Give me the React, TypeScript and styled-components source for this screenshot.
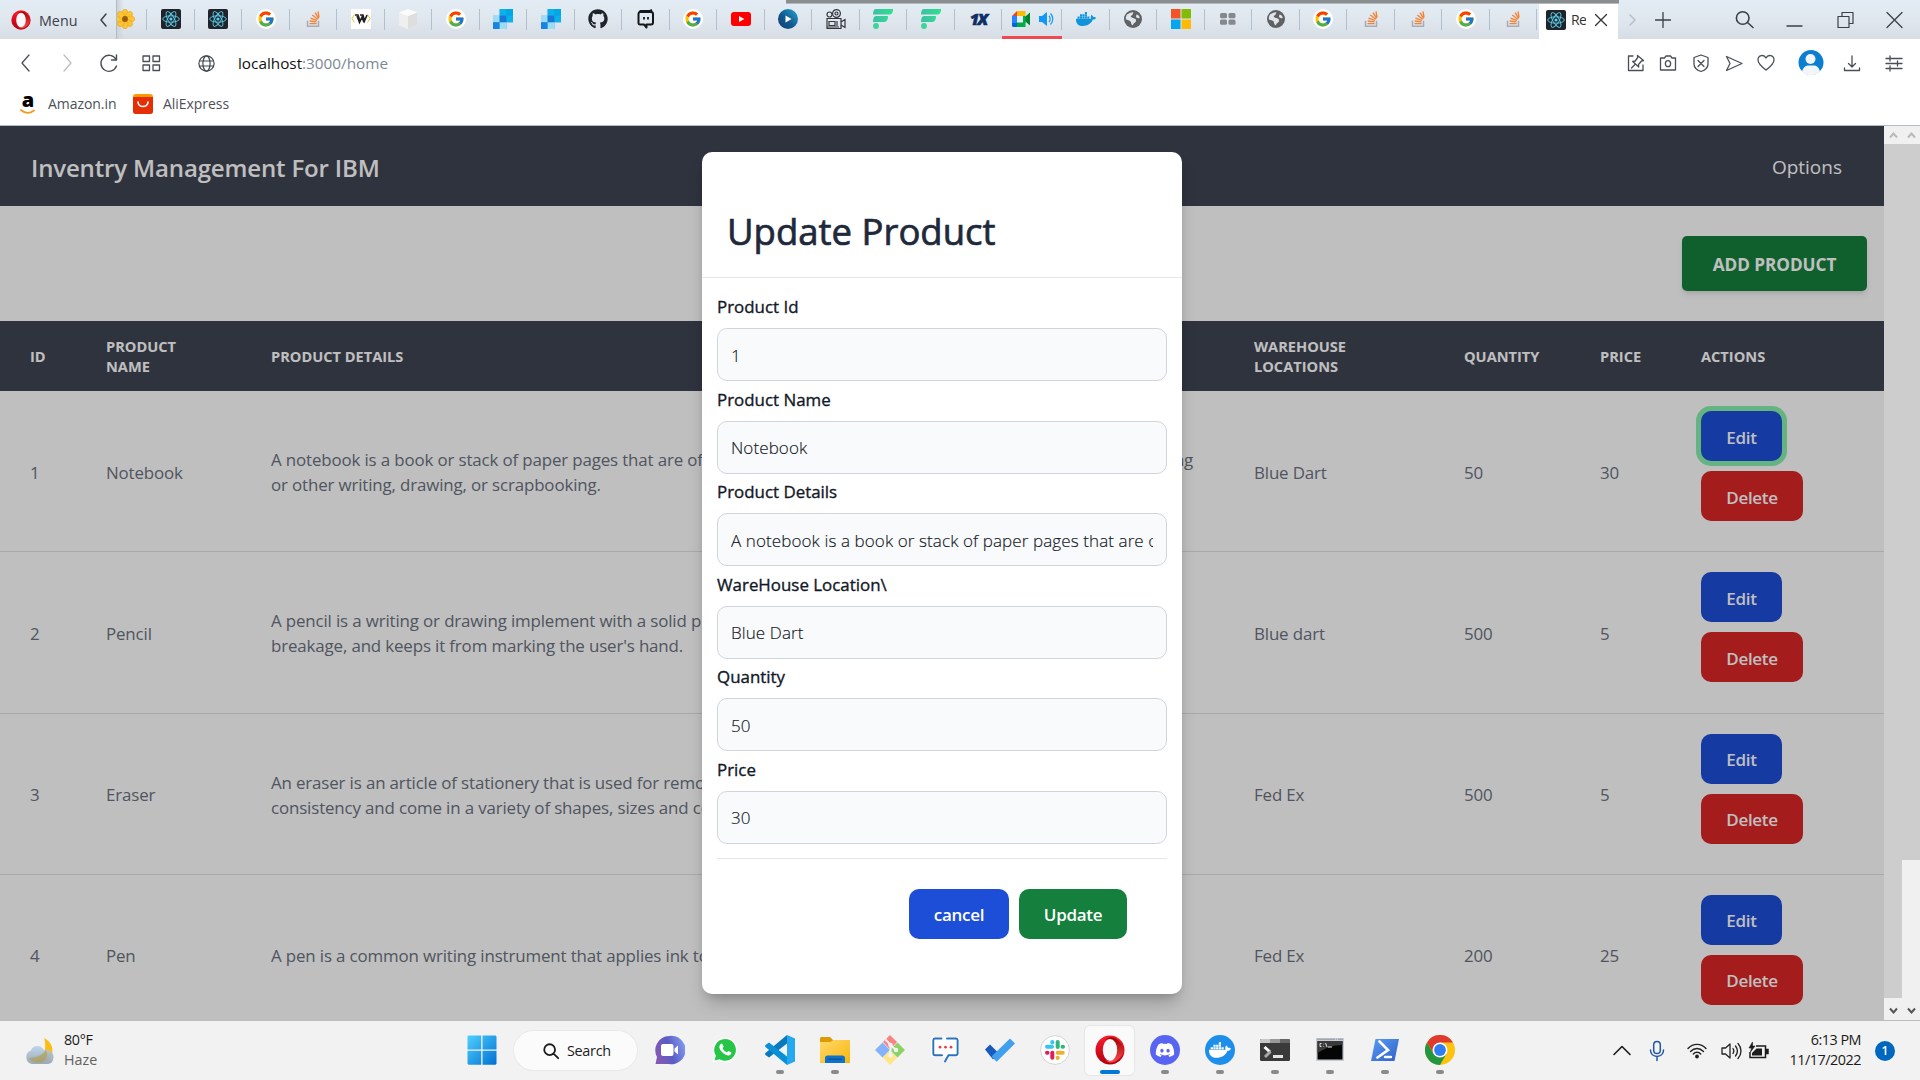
import React from "react";
import styled, { createGlobalStyle, css } from "styled-components";
import { FcGoogle } from "react-icons/fc";
import { FaGithub, FaDocker, FaDiscord } from "react-icons/fa";

const Global = createGlobalStyle`
  *, *::before, *::after { box-sizing: border-box; }
  body { margin: 0; overflow: hidden; }
  button, input { font-family: inherit; }
  svg { display: block; flex: none; }
`;

const Screen = styled.div`
  width: 1920px;
  height: 1080px;
  display: flex;
  flex-direction: column;
  overflow: hidden;
  background: #fff;
  font-family: "Open Sans", "Noto Sans", sans-serif;
`;

/* ---------- browser chrome ---------- */

const TabStrip = styled.div`
  position: relative;
  height: 39px;
  flex: none;
  display: flex;
  background: linear-gradient(#e3ecf4, #dfe6ee 55%, #d8dde5);
`;

const WindowEdge = styled.div`
  position: absolute;
  top: 0;
  left: 786px;
  width: 833px;
  height: 4px;
  background: #8b8e91;
  border-bottom: 1px solid #b4b9be;
`;

const MenuButton = styled.div`
  width: 116px;
  flex: none;
  height: 39px;
  display: flex;
  align-items: center;
  padding-left: 11px;
  font-size: 14.3px;
  color: #3b424c;
`;

const MenuLabel = styled.span`
  margin: 1px 23px 0 8px;
`;

const Tab = styled.div<{ $w?: number; $playing?: boolean }>`
  position: relative;
  width: ${(p) => p.$w ?? 47.5}px;
  flex: none;
  height: 39px;
  padding-bottom: 1px;
  display: flex;
  align-items: center;
  justify-content: center;
  gap: 7px;
  border-bottom: ${(p) => (p.$playing ? "3px solid #f04a50" : "none")};
  padding-top: ${(p) => (p.$playing ? 2 : 0)}px;
  &::after {
    content: "";
    position: absolute;
    right: 0;
    top: 9px;
    width: 1px;
    height: 21px;
    background: #b2c0cd;
  }
`;

const FirstTab = styled(Tab)`
  width: 31px;
  justify-content: flex-start;
  overflow: hidden;
  border-left: 1px solid #b3bac3;
  background: linear-gradient(90deg, #ccd2da, transparent 7px);
  svg { margin-left: -2px; }
`;

const ActiveTab = styled.div`
  width: 79px;
  flex: none;
  margin-left: 2px;
  padding-left: 7px;
  display: flex;
  align-items: center;
  background: #fff;
  font-size: 14px;
  color: #333;
  svg + span { margin: 0 8px 0 5px; width: 15px; overflow: hidden; white-space: nowrap; letter-spacing: -0.6px; }
`;

const WindowButtons = styled.div`
  flex: 1;
  display: grid;
  grid-template-columns: 30px 30px 42px 50px 50px 52px 46px;
  align-items: center;
  justify-items: center;
  color: #3c4047;
`;

const Toolbar = styled.div`
  height: 48px;
  flex: none;
  display: flex;
  align-items: center;
  padding: 0 14px;
  color: #4a4f56;
`;

const NavIcons = styled.div`
  display: grid;
  grid-template-columns: repeat(4, 42px);
  margin-left: -10px;
  justify-items: center;
  align-items: center;
`;

const Address = styled.div`
  flex: 1;
  display: flex;
  align-items: center;
  gap: 23px;
  padding-left: 26px;
  font-size: 15.3px;
  letter-spacing: 0;
  color: #7b8794;
  b { font-weight: 400; color: #111; }
`;

const Actions = styled.div`
  display: grid;
  grid-template-columns: 32px 32px 34px 32px 32px 58px 24px 60px;
  margin-right: -18px;
  justify-items: center;
  align-items: center;
`;

const Bookmarks = styled.div`
  height: 39px;
  flex: none;
  display: flex;
  align-items: center;
  padding: 0 0 5px 19px;
  border-bottom: 1px solid #b1bcc6;
  font-size: 14px;
  letter-spacing: -0.05px;
  color: #4b5158;
`;

const Bookmark = styled.span<{ $w: number; $gap: number }>`
  display: flex;
  align-items: center;
  gap: ${(p) => p.$gap}px;
  width: ${(p) => p.$w}px;
  white-space: nowrap;
`;

const AmazonMark = styled.span`
  width: 18px;
  height: 22px;
  display: flex;
  flex-direction: column;
  align-items: center;
  color: #000;
  font-size: 20px;
  font-weight: 800;
  line-height: 13px;
  svg { margin-top: 3px; }
`;

/* ---------- page ---------- */

const Viewport = styled.div`
  height: 895px;
  flex: none;
  display: flex;
  border-bottom: 1px solid #bdbdbd;
`;

const Page = styled.main`
  position: relative;
  width: 1884px;
  height: 894px;
  overflow: hidden;
  background: #fff;
`;

const Scrollbar = styled.div`
  width: 18px;
  display: flex;
  flex-direction: column;
  background: #f0f0f0;
`;

const ScrollArrow = styled.div<{ $h: number; $tone: string }>`
  height: ${(p) => p.$h}px;
  display: flex;
  align-items: center;
  justify-content: center;
  color: ${(p) => p.$tone};
`;

const Thumb = styled.div<{ $h: number }>`
  height: ${(p) => p.$h}px;
  background: #cdcdcd;
`;

const Spring = styled.div`
  flex: 1;
`;

const Header = styled.header`
  height: 80px;
  display: flex;
  align-items: center;
  justify-content: space-between;
  padding: 0 42px 0 31px;
  background: #3f4453;
  color: #fff;
`;

const Brand = styled.h1`
  margin: 2px 0 0;
  font-size: 24px;
  font-weight: 600;
  letter-spacing: -0.15px;
`;

const Options = styled.span`
  margin-top: 2px;
  font-size: 19px;
`;

const AddBar = styled.div`
  height: 115px;
  display: flex;
  align-items: center;
  justify-content: flex-end;
  padding-right: 17px;
`;

const AddButton = styled.button`
  width: 185px;
  height: 55px;
  padding: 2px 0 0;
  border: 0;
  border-radius: 5px;
  background: #15803d;
  color: #fff;
  font-size: 17.2px;
  font-weight: 700;
  letter-spacing: -0.05px;
  white-space: nowrap;
  box-shadow: 0 4px 6px -1px rgba(0, 0, 0, 0.1), 0 2px 4px -2px rgba(0, 0, 0, 0.1);
`;

const columns = "76px 165px 983px 210px 136px 101px 213px";

const HeadRow = styled.div`
  display: grid;
  grid-template-columns: ${columns};
  align-items: center;
  height: 70px;
  padding-bottom: 1px;
  background: #3f4453;
  color: #fff;
  font-size: 14.6px;
  font-weight: 700;
  line-height: 20px;
  letter-spacing: 0;
  text-transform: uppercase;
`;

const HeadCell = styled.div<{ $narrow?: boolean }>`
  padding: 0 0 0 30px;
  ${(p) => p.$narrow && css`width: 128px;`}
`;

const Row = styled.div`
  display: grid;
  grid-template-columns: ${columns};
  align-items: center;
  height: 161.25px;
  border-bottom: 1.25px solid #e0e2e6;
  color: #6b7280;
  font-size: 16.9px;
  line-height: 25px;
  letter-spacing: -0.14px;
`;

const Cell = styled.div`
  padding: 2px 0 0 30px;
  white-space: pre;
`;

const Buttons = styled.div`
  display: flex;
  flex-direction: column;
  gap: 10px;
  padding: 0 0 10px 30px;
`;

const Action = styled.button<{ $bg: string; $w: number; $ring?: boolean }>`
  width: ${(p) => p.$w}px;
  height: 50px;
  padding: 2px 0 0;
  border: 0;
  border-radius: 10px;
  background: ${(p) => p.$bg};
  color: #fff;
  font-size: 17px;
  font-weight: 600;
  letter-spacing: -0.3px;
  box-shadow: ${(p) => (p.$ring ? "0 0 0 5px #86efac" : "none")};
`;

const Overlay = styled.div`
  position: absolute;
  inset: 0;
  background: rgba(0, 0, 0, 0.25);
`;

const Modal = styled.section`
  position: absolute;
  left: 702px;
  top: 26px;
  width: 480px;
  height: 842px;
  border-radius: 10px;
  background: #fff;
  box-shadow: 0 12px 18px -4px rgba(0, 0, 0, 0.22), 0 5px 8px -4px rgba(0, 0, 0, 0.15);
`;

const ModalTitle = styled.h2`
  height: 126px;
  margin: 0;
  padding: 54px 0 0 25px;
  border-bottom: 1px solid #e2e8f0;
  color: #1e293b;
  font-size: 36.5px;
  font-weight: 400;
  line-height: 50px;
  -webkit-text-stroke: 0.7px #1e293b;
`;

const Form = styled.form`
  margin: 0 15px;
  padding: 15px 0 14px;
  border-bottom: 1px solid #e2e8f0;
`;

const Field = styled.label`
  display: flex;
  flex-direction: column;
  height: 92.6px;
  color: #111827;
  font-size: 16.9px;
  font-weight: 400;
  -webkit-text-stroke: 0.35px #111827;
  line-height: 28px;
  &:last-child { height: 88px; }
`;

const Input = styled.input`
  width: 450px;
  height: 53px;
  margin-top: 7px;
  padding: 1px 13px 0;
  border: 1px solid #d1d5db;
  border-radius: 10px;
  background: #f9fafb;
  color: #111827;
  -webkit-text-stroke: 0.15px #111827;
  font-size: 17px;
  font-weight: 300;
  letter-spacing: 0.1px;
  outline: none;
`;

const ModalFooter = styled.div`
  display: flex;
  justify-content: flex-end;
  gap: 10px;
  padding: 30px 55px 0 0;
`;

/* ---------- taskbar ---------- */

const Taskbar = styled.footer`
  height: 59px;
  flex: none;
  display: flex;
  align-items: center;
  background: #f2f2f2;
  color: #1b1b1b;
`;

const Weather = styled.div`
  width: 454px;
  display: flex;
  align-items: center;
  padding-left: 24px;
  gap: 10px;
  font-size: 14.3px;
  line-height: 20px;
  letter-spacing: -0.3px;
  span { margin-top: -2px; }
  em { display: block; font-style: normal; color: #626262; letter-spacing: 0; }
`;

const AppSlot = styled.div<{ $active?: boolean; $mark?: boolean }>`
  width: 55px;
  height: 59px;
  display: flex;
  flex-direction: column;
  align-items: center;
  padding-top: 14px;
  gap: 5px;
  &::after {
    content: "";
    width: ${(p) => (p.$active ? 20 : 8)}px;
    height: 4px;
    border-radius: 2px;
    background: ${(p) => (p.$active ? "#0078d7" : p.$mark ? "#8a8a8a" : "transparent")};
  }
  ${(p) =>
    p.$active &&
    css`
      background: #fafafa;
      width: 49px;
      height: 49px;
      margin: 0 3px;
      padding-top: 9px;
      border-radius: 5px;
      box-shadow: 0 0 0 1px #e6e6e6;
    `}
`;

const SearchPill = styled.div`
  width: 123px;
  height: 39px;
  margin: 0 5px;
  display: flex;
  align-items: center;
  gap: 7px;
  padding-left: 28px;
  border-radius: 20px;
  background: #fbfbfb;
  box-shadow: 0 0 0 1px #e9e9e9;
  font-size: 14.4px;
  letter-spacing: -0.3px;
`;

const Tray = styled.div`
  margin-left: auto;
  display: flex;
  align-items: center;
  padding-right: 25px;
`;

const TrayIcons = styled.div`
  display: grid;
  grid-template-columns: 35px 36px 44px 24px 30px;
  justify-items: center;
  align-items: center;
`;

const Clock = styled.div`
  width: 84px;
  margin: -2px 14px 0 4px;
  text-align: right;
  white-space: nowrap;
  font-size: 14.4px;
  line-height: 20px;
  letter-spacing: -0.5px;
`;

const Badge = styled.div`
  width: 20px;
  height: 20px;
  border-radius: 50%;
  background: #0067c0;
  color: #fff;
  font-size: 12px;
  font-weight: 600;
  line-height: 20px;
  text-align: center;
`;

/* ---------- icons ---------- */

const Line = ({ d, s = 20, w = 1.5, h, box = 20 }: { d: string; s?: number; w?: number; h?: number; box?: number }) => (
  <svg width={s} height={h ?? s} viewBox={`0 0 ${box} ${h && !(box - s) ? h : box}`} fill="none" stroke="currentColor" strokeWidth={w} strokeLinecap="round" strokeLinejoin="round">
    <path d={d} />
  </svg>
);

const OperaIcon = ({ s }: { s: number }) => (
  <svg width={s} height={s} viewBox="0 0 30 30">
    <defs>
      <linearGradient id="opA" x2="0" y2="1"><stop stopColor="#ff1b2d" /><stop offset="1" stopColor="#b00012" /></linearGradient>
      <linearGradient id="opB" x2="0" y2="1"><stop stopColor="#9c0000" /><stop offset="1" stopColor="#ff4b4b" /></linearGradient>
    </defs>
    <ellipse cx="15" cy="15" rx="14.500" ry="14.500" fill="url(#opA)" />
    <path d="M10 5c4-3.600 9-3.600 13 .5 8 7 7 14 0 19-4 4-9 4-13 .5 9 3 12-4 12-10S18 2.500 10 5z" fill="url(#opB)" />
    <ellipse cx="15" cy="15" rx="7.200" ry="11" fill="#f6f8fa" />
  </svg>
);

const ReactIcon = () => (
  <svg width="20" height="20" viewBox="0 0 20 20">
    <rect width="20" height="20" rx="2" fill="#20232a" />
    <g fill="none" stroke="#5ccfee" strokeWidth=".9">
      <ellipse cx="10" cy="10" rx="8.300" ry="3.200" />
      <ellipse cx="10" cy="10" rx="8.300" ry="3.200" transform="rotate(60 10 10)" />
      <ellipse cx="10" cy="10" rx="8.300" ry="3.200" transform="rotate(120 10 10)" />
    </g>
    <circle cx="10" cy="10" r="1.600" fill="#5ccfee" />
  </svg>
);

const GoogleWrap = styled.span`
  width: 20px;
  height: 20px;
  border-radius: 50%;
  background: #fff;
  display: grid;
  place-items: center;
`;
const GoogleIcon = () => <GoogleWrap><FcGoogle size={18} /></GoogleWrap>;

const StackIcon = () => (
  <svg width="20" height="20" viewBox="0 0 20 20" fill="none">
    <g transform="translate(1 .3)">
      <path d="M3.500 11.500v5.500h11v-5.500" stroke="#a9adb3" strokeWidth="1.500" />
      <path d="M5.500 14.300h7M5.700 11.700l6.800.9M6.500 8.800l6.400 2.300M8.300 5.700l5.500 4.200M11 3.300l3.700 5.700M14 2l1 6" stroke="#f58233" strokeWidth="1.400" />
    </g>
  </svg>
);

const FlowerIcon = () => (
  <svg width="20" height="20" viewBox="0 0 20 20">
    <g fill="#fbc531" stroke="#e19a1b" strokeWidth=".5">
      {[0, 45, 90, 135, 180, 225, 270, 315].map((a) => (
        <ellipse key={a} cx="10" cy="4.500" rx="2.900" ry="4.200" transform={`rotate(${a} 10 10)`} />
      ))}
    </g>
    <circle cx="10" cy="10" r="2.900" fill="#9a5a10" />
  </svg>
);

const WIcon = () => (
  <svg width="20" height="20" viewBox="0 0 20 20" fill="none">
    <rect width="20" height="20" fill="#fff" />
    <path d="M3.500 5.500L1 9.500l2.500 4M16.500 5.500l2.500 4-2.500 4" stroke="#d9cb3c" />
    <path d="M4 6h3l2 6M9 6h3l1.500 6L16 6M6 7l2.500 6.500L11 8l2 5.500" stroke="#222" strokeWidth="1.600" />
  </svg>
);

const CubeIcon = () => (
  <svg width="20" height="20" viewBox="0 0 20 20">
    <path d="M10 0l9 3.500V16l-9 4-9-4V3.500z" fill="#f3f3f3" />
    <path d="M10 7l9-3.500V16l-9 4z" fill="#dedede" />
    <path d="M1 3.500L10 7v13l-9-4z" fill="#efefef" />
    <path d="M10 0l9 3.500L10 7 1 3.500z" fill="#fbfbfb" />
  </svg>
);

const SendgridIcon = () => (
  <svg width="20" height="20" viewBox="0 0 21 21">
    <path d="M7 0h14v14h-7v7H0V7h7z" fill="#1a9fe0" />
    <path d="M7 0h7v7H7zM14 7h7v7h-7z" fill="#0cb0ea" />
    <path d="M0 7h7v7H0z" fill="#9bdcf7" />
    <path d="M7 7h7v7H7z" fill="#1a77d6" />
    <path d="M14 0h7v7h-7z" fill="#00a8e8" />
    <path d="M0 14h7v7H0z" fill="#1a82e2" />
    <path d="M7 14h7v7H7z" fill="#9bdcf7" />
  </svg>
);

const RobotIcon = () => (
  <svg width="20" height="20" viewBox="0 0 20 20" fill="none" stroke="#15171b" strokeWidth="2">
    <path d="M3 3.500L4.500 2H14l2 -1M4 3a2 2 0 00-1.500 2v9A1.500 1.500 0 004 15.500h4l2.500 3v-3h4.500a2 2 0 002-2V5a2 2 0 00-2-2z" strokeLinejoin="round" />
    <path d="M8 8v2.500M12 8v2.500" strokeWidth="1.800" />
  </svg>
);

const YoutubeIcon = () => (
  <svg width="20" height="20" viewBox="0 0 20 20">
    <rect y="3" width="20" height="14" rx="3" fill="#f00" />
    <path d="M8 7l5.300 3L8 13z" fill="#fff" />
  </svg>
);

const PlayIcon = () => (
  <svg width="20" height="20" viewBox="0 0 20 20">
    <defs><linearGradient id="pl" x1="1" x2="0" y2="1"><stop stopColor="#27a3cf" /><stop offset=".55" stopColor="#115a90" /><stop offset="1" stopColor="#123a6d" /></linearGradient></defs>
    <circle cx="10" cy="10" r="10" fill="url(#pl)" />
    <path d="M7.500 6.500l6 3.500-6 3.500z" fill="#fff" />
  </svg>
);

const CameraReel = () => (
  <svg width="20" height="20" viewBox="0 0 20 20" fill="none" stroke="#33373c" strokeWidth="1.200">
    <circle cx="10.500" cy="4.500" r="3.900" /><circle cx="10.500" cy="4.500" r="1.500" />
    <circle cx="3.500" cy="5.500" r="2.500" />
    <path d="M1 9.500h14v10H1zM15 13l4-2.500v8L15 16M3 12.500h6v4H3zM11 12v5M1 18h12" />
  </svg>
);

const FIcon = () => (
  <svg width="20" height="20" viewBox="0 0 20 20">
    <defs><linearGradient id="fg"><stop stopColor="#3dbfa6" /><stop offset="1" stopColor="#2fe08a" /></linearGradient></defs>
    <path d="M3 0h17c0 3.500-1 5.500-4 5.500H0C0 2 1 0 3 0zM3 7h12c0 4-1.500 6-4 6H0c0-4 1-6 3-6z" fill="url(#fg)" />
    <circle cx="3" cy="17" r="2.900" fill="#35d79a" />
  </svg>
);

const OneXWrap = styled.span`
  font-size: 16px;
  font-weight: 800;
  font-style: italic;
  letter-spacing: -1.500px;
  color: #0d2f66;
  -webkit-text-stroke: 0.6px #0d2f66;
`;

const MeetIcon = () => (
  <svg width="20" height="20" viewBox="0 0 20 20">
    <path d="M1 7l5-5v5z" fill="#ea4335" />
    <path d="M6 2h8.500v5H6z" fill="#fbbc04" />
    <path d="M1 7h5v7H1z" fill="#2684fc" />
    <path d="M1 14h5v4H2.500A1.500 1.500 0 011 16.500z" fill="#0066da" />
    <path d="M6 13h8.500v5H6z" fill="#00ac47" />
    <path d="M11.500 10L19 3.500v13z" fill="#00832d" />
    <path d="M12 7h2.500v7H12z" fill="#00ac47" />
    <path d="M6 7h6v6.500H6z" fill="#e6edf4" />
  </svg>
);

const SpeakerIcon = () => (
  <svg width="16" height="16" viewBox="0 0 16 16">
    <path d="M1 5h3l5-4v14l-5-4H1z" fill="#1397f5" />
    <path d="M11 5c1.500 1.500 1.500 4.500 0 6M12.500 2.500c3 3 3 8 0 11" fill="none" stroke="#1397f5" strokeWidth="1.200" />
  </svg>
);

const EarthIcon = () => (
  <svg width="18" height="18" viewBox="0 0 18 18">
    <circle cx="9" cy="9" r="9" fill="#5f6163" />
    <path d="M3 4.500C5 3 7 2 9.500 2.200 8.500 3.500 9 5 7.500 5.500S7 7.500 9 8s3.500 1 3 3-3 2-3 4.500c-1-.5-2-1.500-2-3S4.500 10 2 9.500C1.500 8 2 6 3 4.500zM12.500 4.500c1.500 0 3 1.500 3.200 3.500-1.700.5-3.500 0-3.700-1.500z" fill="#dfe5ec" />
  </svg>
);

const MicrosoftIcon = () => (
  <svg width="20" height="20" viewBox="0 0 20 20">
    <path d="M0 0h9.500v9.500H0z" fill="#f35325" /><path d="M10.500 0H20v9.500h-9.500z" fill="#81bc06" />
    <path d="M0 10.500h9.500V20H0z" fill="#05a6f0" /><path d="M10.500 10.500H20V20h-9.500z" fill="#ffba08" />
  </svg>
);

const GridIcon = () => (
  <svg width="16" height="12" viewBox="0 0 16 12" fill="#85888c">
    <rect width="7" height="5.300" rx="1.500" /><rect x="8.500" width="7" height="5.300" rx="1.500" />
    <rect y="6.500" width="7" height="5.300" rx="1.500" /><rect x="8.500" y="6.500" width="7" height="5.300" rx="1.500" />
  </svg>
);

const DockerTab = () => <FaDocker size={20} color="#1193dc" />;

const AliIcon = () => (
  <svg width="20" height="20" viewBox="0 0 20 20">
    <rect width="20" height="20" rx="3" fill="#ff9a00" />
    <path d="M0 3h20v14a3 3 0 01-3 3H3a3 3 0 01-3-3z" fill="#e62e04" />
    <path d="M5 8c0 6 10 6 10 0" fill="none" stroke="#fff" strokeWidth="1.700" strokeLinecap="round" />
  </svg>
);

const AvatarIcon = () => (
  <svg width="26" height="26" viewBox="0 0 26 26">
    <circle cx="13" cy="12.500" r="12.500" fill="#0a7fd2" />
    <circle cx="12.500" cy="9" r="5" fill="#f3f5f8" />
    <path d="M4 21.500c1-4 4-6 6-6h6c3 0 5 2.500 6 6-5 5-13 5-18 0z" fill="#f3f5f8" />
  </svg>
);

const GlobeIcon = () => (
  <svg width="17" height="17" viewBox="0 0 17 17" fill="none" stroke="#3f454d" strokeWidth="1.200">
    <circle cx="8.500" cy="8.500" r="7.600" /><ellipse cx="8.500" cy="8.500" rx="3.600" ry="7.600" />
    <path d="M1.500 6h14M1.500 11h14" />
  </svg>
);

const WeatherIcon = () => (
  <svg width="30" height="28" viewBox="0 0 30 28">
    <defs><linearGradient id="cl" x2="0" y2="1"><stop stopColor="#b9d3e8" /><stop offset="1" stopColor="#8f9fb0" /></linearGradient></defs>
    <path d="M20 1c6 3 10 9 8 16-2 8-11 11-18 7 8-3 14-10 10-23z" fill="#fcbc12" />
    <path d="M8 27a7 7 0 01-1-13.500C8 8 17 7 20 13c5-1 10 2 9.500 7.500C29 25 27 27 23 27z" fill="url(#cl)" opacity=".88" />
    <path d="M5 21c6 0 14-3 17-8 4 8-3 13-9 12.500-4 0-7-2-8-4.500z" fill="#b19c49" opacity=".6" />
  </svg>
);

const StartIcon = () => (
  <svg width="30" height="30" viewBox="0 0 30 30">
    <defs><linearGradient id="st" x2="1" y2="1"><stop stopColor="#4fd0ff" /><stop offset="1" stopColor="#0070d0" /></linearGradient></defs>
    <path d="M1.500 .5h12.700v14H.5v-13zM15.500 .5h13l1 1v13h-14zM.5 15.700h13.700v14H1.500l-1-1zM15.500 15.700h14v13l-1 1h-13z" fill="url(#st)" />
  </svg>
);

const ChatIcon = () => (
  <svg width="30" height="30" viewBox="0 0 30 30">
    <defs><linearGradient id="ch" x1="0" x2="1" y1=".3"><stop stopColor="#8158b4" /><stop offset=".4" stopColor="#5a5cc6" /><stop offset="1" stopColor="#8aa6f5" /></linearGradient></defs>
    <g transform="translate(-1 0)">
      <path d="M15 1a14.200 14.200 0 110 28H1.500L3 22A14.200 14.200 0 0115 1z" fill="url(#ch)" />
      <rect x="7" y="9" width="12.500" height="12" rx="2" fill="#fff" />
      <path d="M20.500 13.500l3.500-3v9l-3.500-3z" fill="#fff" />
    </g>
  </svg>
);

const WhatsappIcon = () => (
  <svg width="30" height="30" viewBox="0 0 30 30">
    <path d="M15 2.500a12.300 12.300 0 11-6 23L2.500 27.500l1.800-6.700A12.300 12.300 0 0115 2.500z" fill="#fff" />
    <path d="M15 4a10.900 10.900 0 11-5.500 20.300L4.500 25.500l1.400-4.800A10.900 10.900 0 0115 4z" fill="#25c648" />
    <path d="M10.500 9.200c.8-1 1.700-.8 2 0l1 2.200c.2.500-1 1.500-.8 2 .8 1.800 2.200 3 4 3.800.6.200 1.300-1.300 1.900-1.100l2.300 1.100c.8.400.3 1.700-.2 2.300-1.200 1.200-3 1.200-5 .3-3-1.400-5-3.700-6-6-.6-1.700-.5-3.300.8-4.600z" fill="#fff" />
  </svg>
);

const VscodeIcon = () => (
  <svg width="30" height="30" viewBox="0 0 30 30">
    <path d="M22 0v8.500L4 22.500l-3.500-2.500c-.6-.6-.6-1.400 0-2z" fill="#0879bd" />
    <path d="M22 30v-8.500L4 7.500.5 10c-.6.600-.6 1.400 0 2z" fill="#0b8fd6" />
    <path d="M22 0l8 3.500v23L22 30z" fill="#25a8f0" />
  </svg>
);

const FolderIcon = () => (
  <svg width="30" height="30" viewBox="0 0 30 30">
    <defs><linearGradient id="fo" x2="1" y2="1"><stop stopColor="#ffd96b" /><stop offset="1" stopColor="#f8b60d" /></linearGradient></defs>
    <path d="M0 3.500C0 2.500.6 2 1.500 2H10l3 3v5H0z" fill="#dc9a07" />
    <path d="M0 7h10.500l3-2H30v23H0z" fill="url(#fo)" />
    <path d="M5 23c0-1.500 1-2.500 2.500-2.500h15c1.500 0 2.500 1 2.500 2.500v5H5z" fill="#0f72c9" />
    <path d="M8 24.200h14" stroke="#0b4f97" strokeWidth="1.200" />
  </svg>
);

const GitIcon = () => (
  <svg width="30" height="30" viewBox="0 0 30 30">
    <path d="M15 0l7 7-7 7.500L8 7z" fill="#fb8283" /><path d="M7.500 7.500L15 15l-7.500 7.500L0 15z" fill="#85b2fb" />
    <path d="M22.500 7.500L30 15l-7.500 7.500L15 15z" fill="#8dd267" /><path d="M15 15.500l7 7-7 7.500-7-7.500z" fill="#fee684" />
    <path d="M10.500 4.500L15.500 10v10M15.500 10l5.500 5" stroke="#f2f2f2" strokeWidth="2" fill="none" />
    <circle cx="15.500" cy="10" r="2.300" fill="#f2f2f2" /><circle cx="15.500" cy="20.500" r="2.300" fill="#f2f2f2" /><circle cx="21" cy="15" r="2.300" fill="#f2f2f2" />
  </svg>
);

const MessageIcon = () => (
  <svg width="30" height="30" viewBox="0 0 30 30" fill="none">
    <path d="M3 2h24a2 2 0 012 2v16a2 2 0 01-2 2h-7l-5 6v-6H3a2 2 0 01-2-2V4a2 2 0 012-2z" fill="#fff" />
    <path d="M11.500 3.500H5A1.700 1.700 0 003.300 5v13.500A1.700 1.700 0 005 20.300h7M17 3.500h9A1.700 1.700 0 0127.600 5v13.500a1.700 1.700 0 01-1.600 1.800h-7.500L15 26.500" stroke="#2a74bb" strokeWidth="1.900" strokeLinecap="round" />
    <g fill="#e04444"><circle cx="10" cy="12.200" r="1.400" /><circle cx="15.500" cy="12.200" r="1.400" /><circle cx="21" cy="12.200" r="1.400" /></g>
  </svg>
);

const TodoIcon = () => (
  <svg width="30" height="30" viewBox="0 0 30 30">
    <path d="M0 14.500L5 9.500l9 9-6 6z" fill="#185abd" />
    <path d="M6.500 21.500L25 3.500l5 5-18.300 18.300z" fill="#41a0ee" />
  </svg>
);

const SlackIcon = () => (
  <svg width="30" height="30" viewBox="0 0 30 30">
    <circle cx="15" cy="15" r="14.400" fill="#fff" stroke="#d4d4d4" />
    <g strokeWidth="4" strokeLinecap="round">
      <path d="M7 11.800h5" stroke="#36c5f0" /><path d="M12.300 7v.5" stroke="#36c5f0" />
      <path d="M17.700 7v5" stroke="#2eb67d" /><path d="M22.500 11.800h.5" stroke="#2eb67d" />
      <path d="M17.700 17.700h5" stroke="#ecb22e" /><path d="M17.700 22.700v.3" stroke="#ecb22e" />
      <path d="M12.300 17.700v5" stroke="#e01e5a" /><path d="M7 17.700h.5" stroke="#e01e5a" />
    </g>
  </svg>
);

const Disc = styled.span<{ $bg: string }>`
  width: 30px;
  height: 30px;
  border-radius: 50%;
  display: grid;
  place-items: center;
  background: ${(p) => p.$bg};
`;

const TerminalIcon = () => (
  <svg width="30" height="30" viewBox="0 0 30 30" fill="none">
    <rect y="4" width="30" height="22" rx="1.500" fill="#3a3a3a" />
    <path d="M0 8V5.500A1.500 1.500 0 011.500 4H10v4z" fill="#c9c9c9" /><path d="M10 4h10v4H10z" fill="#999" /><path d="M20 4h8.500A1.500 1.500 0 0130 5.500V8H20z" fill="#666" />
    <path d="M4.500 12l5.500 5" stroke="#fff" strokeWidth="3" /><path d="M10.500 16.500l-5.500 5.500" stroke="#a8a8a8" strokeWidth="3" />
    <path d="M13 21.500h10" stroke="#e4e4e4" strokeWidth="3" />
  </svg>
);

const CmdIcon = () => (
  <svg width="30" height="30" viewBox="0 0 30 30" fill="none">
    <rect x="1" y="3" width="28" height="23" fill="#c9ced6" /><path d="M2 4.200h26" stroke="#8e959f" strokeDasharray="18 1 1 1" />
    <rect x="2.500" y="6" width="25" height="18.500" fill="#050505" />
    <path d="M2.500 6h25v4c-10 0-17 3-25 8z" fill="#3a3a3a" />
    <path d="M6.500 8.500H5v3h1.500M8.500 8.800v.5M8.500 11v.5M10.500 8l1.500 4M13 12h4" stroke="#ddd" />
  </svg>
);

const PowershellIcon = () => (
  <svg width="30" height="30" viewBox="0 0 30 30" fill="none">
    <defs><linearGradient id="ps" x2="1" y2="1"><stop stopColor="#5a9bf6" /><stop offset="1" stopColor="#2e62c4" /></linearGradient></defs>
    <path d="M5.500 4H29l-4.500 22H1z" fill="url(#ps)" />
    <path d="M9.500 6.500l8.500 8.500L7.500 22.500" stroke="#fff" strokeWidth="2.700" strokeLinecap="round" /><path d="M15 22h6" stroke="#fff" strokeWidth="2.400" strokeLinecap="round" />
  </svg>
);

const ChromeIcon = () => (
  <svg width="30" height="30" viewBox="0 0 30 30">
    <circle cx="15" cy="15" r="15" fill="#fdc30f" />
    <path d="M2 7.500A15 15 0 0128 7.500H15L8.500 18.800z" fill="#e03a2e" />
    <path d="M2 7.500A15 15 0 0015 30l6.500-11.200H8.500z" fill="#24963f" />
    <circle cx="15" cy="15" r="7.500" fill="#fff" /><circle cx="15" cy="15" r="5.900" fill="#2f7df0" />
  </svg>
);

const MicIcon = () => (
  <svg width="16" height="22" viewBox="0 0 16 22" fill="none" stroke="#2357a4" strokeWidth="1.500" strokeLinecap="round">
    <rect x="4.700" y="1.500" width="6.600" height="12" rx="3.300" /><path d="M1.500 10c0 8.500 13 8.500 13 0M8 16.500v4" />
  </svg>
);

const WifiIcon = () => (
  <svg width="20" height="17" viewBox="0 0 20 17" fill="none" stroke="#222" strokeWidth="1.400" strokeLinecap="round">
    <path d="M1 6.500c5-5.500 13-5.500 18 0M3.500 9.500c4-4 9-4 13 0M6.300 12c2-2.300 5.400-2.300 7.400 0" /><circle cx="10" cy="14.500" r="1.200" fill="#222" />
  </svg>
);

const VolumeIcon = () => (
  <svg width="21" height="18" viewBox="0 0 21 18" fill="none" stroke="#222" strokeWidth="1.300" strokeLinecap="round" strokeLinejoin="round">
    <path d="M1 6h3.500L9 2v14l-4.500-4H1zM12 6.500c1 1.500 1 3.500 0 5M14.500 4c2.300 3 2.300 7 0 10M17 1.500c4 4.500 4 10.500 0 15" />
  </svg>
);

const BatteryIcon = () => (
  <svg width="21" height="18" viewBox="0 0 21 18" fill="none" stroke="#1c1c1c" strokeWidth="1.500">
    <path d="M8 4h9.500v11.500H2V10" /><path d="M8.500 6.500H14v7H4V11z" fill="#1c1c1c" stroke="none" /><path d="M18.500 7.500H20v4h-1.500z" fill="#1c1c1c" />
    <path d="M4.500 0L1 6h2.500L2.500 10 7 4H4.500z" fill="#1c1c1c" strokeWidth=".6" />
  </svg>
);

const Chevron = ({ d, w = 2 }: { d: string; w?: number }) => (
  <svg width="9" height="8" viewBox="0 0 9 8" fill="none" stroke="currentColor" strokeWidth={w}><path d={d} /></svg>
);

/* ---------- data ---------- */

const tabs: React.ComponentType[] = [
  ReactIcon, ReactIcon, GoogleIcon, StackIcon, WIcon, CubeIcon, GoogleIcon, SendgridIcon, SendgridIcon,
  () => <FaGithub size={20} color="#20252b" />, RobotIcon, GoogleIcon, YoutubeIcon, PlayIcon, CameraReel, FIcon, FIcon,
  () => <OneXWrap>1X</OneXWrap>,
];
const laterTabs: React.ComponentType[] = [
  DockerTab, EarthIcon, MicrosoftIcon, GridIcon, EarthIcon, GoogleIcon, StackIcon, StackIcon, GoogleIcon, StackIcon,
];

const products = [
  { id: 1, name: "Notebook", details: "A notebook is a book or stack of paper pages that are often ruled and used for purposes such as note-taking, journaling\nor other writing, drawing, or scrapbooking.", place: "Blue Dart", qty: 50, price: 30 },
  { id: 2, name: "Pencil", details: "A pencil is a writing or drawing implement with a solid pigment core in a protective casing that reduces the risk of core\nbreakage, and keeps it from marking the user's hand.", place: "Blue dart", qty: 500, price: 5 },
  { id: 3, name: "Eraser", details: "An eraser is an article of stationery that is used for removing marks from paper or skin. Erasers have a rubbery\nconsistency and come in a variety of shapes, sizes and colours.", place: "Fed Ex", qty: 500, price: 5 },
  { id: 4, name: "Pen", details: "A pen is a common writing instrument that applies ink to a surface, usually paper, for writing or drawing.", place: "Fed Ex", qty: 200, price: 25 },
];

const fields: [string, string][] = [
  ["Product Id", "1"],
  ["Product Name", "Notebook"],
  ["Product Details", products[0].details.replace("\n", " ")],
  ["WareHouse Location\\", "Blue Dart"],
  ["Quantity", "50"],
  ["Price", "30"],
];

const apps: { icon: React.ReactNode; mark?: boolean; active?: boolean }[] = [
  { icon: <ChatIcon /> },
  { icon: <WhatsappIcon /> },
  { icon: <VscodeIcon />, mark: true },
  { icon: <FolderIcon />, mark: true },
  { icon: <GitIcon /> },
  { icon: <MessageIcon /> },
  { icon: <TodoIcon /> },
  { icon: <SlackIcon /> },
  { icon: <OperaIcon s={30} />, active: true },
  { icon: <Disc $bg="#5865f2"><FaDiscord size={20} color="#fff" /></Disc>, mark: true },
  { icon: <Disc $bg="#1d8fea"><FaDocker size={22} color="#fff" /></Disc>, mark: true },
  { icon: <TerminalIcon />, mark: true },
  { icon: <CmdIcon />, mark: true },
  { icon: <PowershellIcon />, mark: true },
  { icon: <ChromeIcon />, mark: true },
];

const UP = "M1 6.500l3.500-4 3.500 4";
const DOWN = "M1 1.500l3.500 4 3.500-4";

const Faded = styled.span`
  color: #b9bec5;
`;

function BrowserChrome() {
  return (
    <>
      <TabStrip>
        <MenuButton>
          <OperaIcon s={20} />
          <MenuLabel>Menu</MenuLabel>
          <Line d="M6 1L1 7l5 6" s={8} h={14} box={8} />
        </MenuButton>
        <FirstTab><FlowerIcon /></FirstTab>
        {tabs.map((Icon, i) => <Tab key={i}><Icon /></Tab>)}
        <Tab $w={60} $playing><MeetIcon /><SpeakerIcon /></Tab>
        {laterTabs.map((Icon, i) => <Tab key={i}><Icon /></Tab>)}
        <ActiveTab>
          <ReactIcon />
          <span>Re</span>
          <Line d="M1.500 1.500l11 11M12.500 1.500l-11 11" s={14} box={14} w={1.3} />
        </ActiveTab>
        <WindowButtons>
          <Faded><Line d="M1 2l5 5-5 5" s={8} h={14} box={8} /></Faded>
          <Line d="M8 .5v15M.5 8h15" s={16} box={16} w={1.3} />
          <span />
          <Line d="M14 8A6.300 6.300 0 111.400 8 6.300 6.300 0 0114 8zM12.500 12.500L18 17.500" s={20} w={1.6} />
          <Line d="M2 16h15" s={20} w={1.4} />
          <Line d="M2 6.500h11v11H2zM6 6V2.500h11v11h-3.500" s={20} w={1.2} />
          <Line d="M2 2.500l15 15M17 2.500l-15 15" s={20} w={1.3} />
        </WindowButtons>
        <WindowEdge />
      </TabStrip>
      <Toolbar>
        <NavIcons>
          <Line d="M14 2L7 10l7 8" w={1.3} />
          <Faded><Line d="M7 2l7 8-7 8" w={1.3} /></Faded>
          <Line d="M17 6.500A8 8 0 1017.500 13M17.500 2v5h-5" w={1.4} />
          <Line d="M2 3h6.500v5.500H2zM12 3h6.500v5.500H12zM2 12h6.500v5.500H2zM12 12h6.500v5.500H12z" w={1.3} />
        </NavIcons>
        <Address><GlobeIcon /><span><b>localhost</b>:3000/home</span></Address>
        <Actions>
          <Line d="M7 3H2.500v14.500H17V12M11.500 2.500l6 5-2 .5-3 3.500.2 2.500-6-5.500 2.500-.5 2.500-3.500zM9 11.500L5.500 15" w={1.3} />
          <Line d="M2.500 5h4L8 3h4.500L14 5h3.500v12h-15zM10 7.700c3.500 0 3.500 6 0 6s-3.500-6 0-6z" w={1.3} />
          <Line d="M10 2l7 2.500V11c0 4-4 6.500-7 7.500-3-1-7-3.500-7-7.500V4.500zM7 7.500l6 6M13 7.500l-6 6" w={1.3} />
          <Line d="M2.500 3.500L18 10.500 2.500 17.500 6 10.500z" w={1.3} />
          <Line d="M10 17C6 14 2 10.500 2 7c0-5 6-6 8-2 2-4 8-3 8 2 0 3.500-4 7-8 10z" w={1.3} />
          <AvatarIcon />
          <Line d="M10 3v11M6.500 10.500L10 14l3.500-3.500M2.500 15v2.500h15V15" w={1.3} />
          <Line d="M2 5.500h16M2 10.500h16M2 15.500h16M6 3v5M13.500 8v5M6 13v5" w={1.3} />
        </Actions>
      </Toolbar>
      <Bookmarks>
        <Bookmark $w={114} $gap={11}>
          <AmazonMark>
            a
            <svg width="16" height="5" viewBox="0 0 16 5" fill="none" stroke="#f49b18" strokeWidth="1.800" strokeLinecap="round"><path d="M1 1c4 3.500 9 3.500 13 .5" /></svg>
          </AmazonMark>
          Amazon.in
        </Bookmark>
        <Bookmark $w={100} $gap={10}><AliIcon />AliExpress</Bookmark>
      </Bookmarks>
    </>
  );
}

function ProductTable() {
  return (
    <div>
      <HeadRow>
        <HeadCell>ID</HeadCell>
        <HeadCell $narrow>Product Name</HeadCell>
        <HeadCell>Product Details</HeadCell>
        <HeadCell $narrow>Warehouse Locations</HeadCell>
        <HeadCell>Quantity</HeadCell>
        <HeadCell>Price</HeadCell>
        <HeadCell>Actions</HeadCell>
      </HeadRow>
      {products.map((p) => (
        <Row key={p.id}>
          <Cell>{p.id}</Cell>
          <Cell>{p.name}</Cell>
          <Cell>{p.details}</Cell>
          <Cell>{p.place}</Cell>
          <Cell>{p.qty}</Cell>
          <Cell>{p.price}</Cell>
          <Buttons>
            <Action $bg="#1d4ed8" $w={81} $ring={p.id === 1}>Edit</Action>
            <Action $bg="#dc2626" $w={102}>Delete</Action>
          </Buttons>
        </Row>
      ))}
    </div>
  );
}

function UpdateModal() {
  return (
    <Modal>
      <ModalTitle>Update Product</ModalTitle>
      <Form>
        {fields.map(([label, value]) => (
          <Field key={label}>
            {label}
            <Input defaultValue={value} />
          </Field>
        ))}
      </Form>
      <ModalFooter>
        <Action $bg="#1d4ed8" $w={100}>cancel</Action>
        <Action $bg="#15803d" $w={108}>Update</Action>
      </ModalFooter>
    </Modal>
  );
}

export default function App() {
  return (
    <Screen>
      <Global />
      <BrowserChrome />
      <Viewport>
        <Page>
          <Header><Brand>Inventry Management For IBM</Brand><Options>Options</Options></Header>
          <AddBar><AddButton>ADD PRODUCT</AddButton></AddBar>
          <ProductTable />
          <Overlay />
          <UpdateModal />
        </Page>
        <Scrollbar>
          <ScrollArrow $h={18} $tone="#b9b9b9"><Chevron d={UP} /></ScrollArrow>
          <Thumb $h={854} />
          <Spring />
          <ScrollArrow $h={18} $tone="#555"><Chevron d={DOWN} /></ScrollArrow>
        </Scrollbar>
        <Scrollbar>
          <ScrollArrow $h={18} $tone="#b9b9b9"><Chevron d={UP} /></ScrollArrow>
          <Thumb $h={716} />
          <Spring />
          <ScrollArrow $h={18} $tone="#555"><Chevron d={DOWN} /></ScrollArrow>
        </Scrollbar>
      </Viewport>
      <Taskbar>
        <Weather><WeatherIcon /><span>80°F<em>Haze</em></span></Weather>
        <AppSlot><StartIcon /></AppSlot>
        <SearchPill>
          <Line d="M14.500 8.500A6 6 0 112.500 8.500a6 6 0 0112 0zM12.800 12.800L18 18" s={18} w={2} />
          Search
        </SearchPill>
        {apps.map((a, i) => <AppSlot key={i} $mark={a.mark} $active={a.active}>{a.icon}</AppSlot>)}
        <Tray>
          <TrayIcons>
            <Line d="M2 13.500l8-8 8 8" w={1.600} />
            <MicIcon />
            <WifiIcon />
            <VolumeIcon />
            <BatteryIcon />
          </TrayIcons>
          <Clock>6:13 PM<br />11/17/2022</Clock>
          <Badge>1</Badge>
        </Tray>
      </Taskbar>
    </Screen>
  );
}
